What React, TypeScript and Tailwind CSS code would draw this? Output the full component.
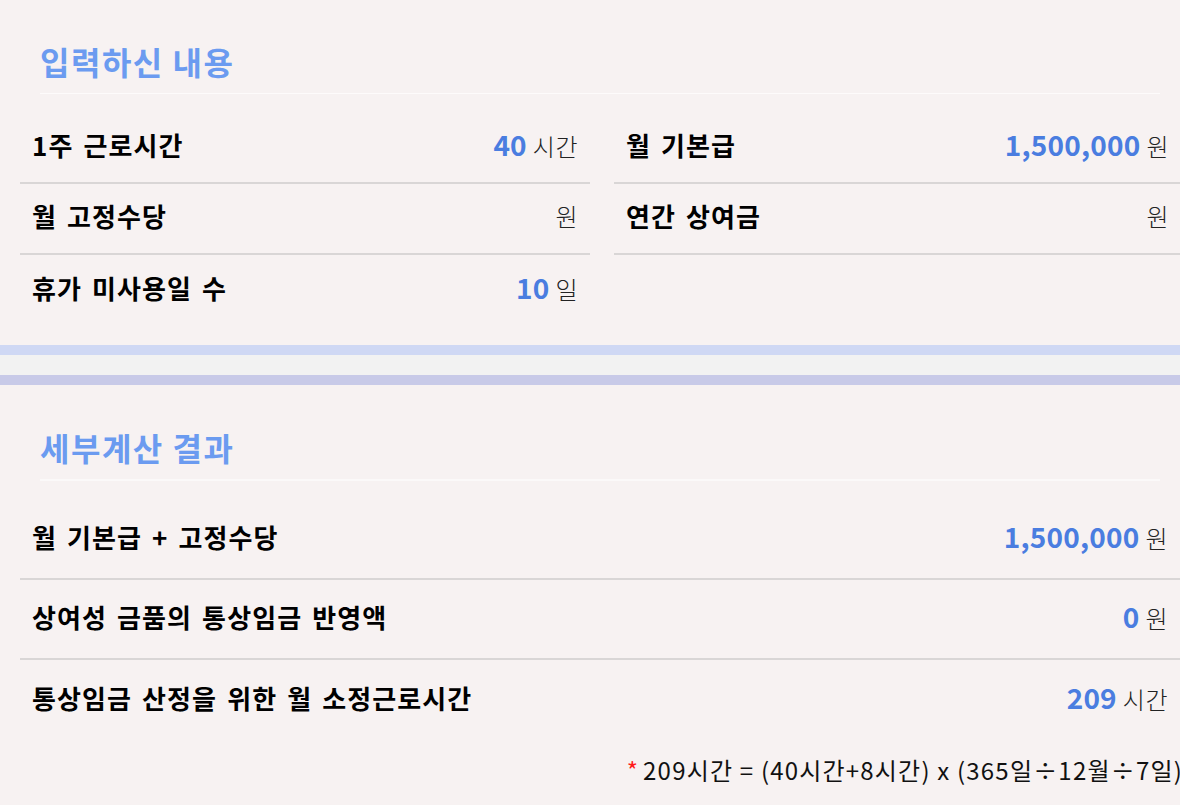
import React from "react";

const FONT = { fontFamily: '"Noto Sans CJK KR", "Noto Sans", sans-serif' };

function Row({ label, value, unit, border = true, h = "h-[71px]" }: { label: string; value?: string; unit?: string; border?: boolean; h?: string }) {
  return (
    <div className={`flex items-center justify-between px-3 pb-[5px] ${h} ${border ? "border-b-2 border-[#d9d6d6]" : ""}`}>
      <span className="text-[26px] font-bold text-black tracking-[1.1px] [word-spacing:3px] leading-[36px]">{label}</span>
      <span className="flex items-baseline gap-[6px]">
        {value && <span className="text-[28px] font-bold text-[#4a7de0] tracking-[0.2px] leading-[36px]">{value}</span>}
        {unit && <span className="text-[24px] font-light text-[#222] tracking-[0.5px] leading-[36px]">{unit}</span>}
      </span>
    </div>
  );
}

export default function App() {
  return (
    <div className="w-[1180px] h-[805px] overflow-hidden bg-[#f7f2f2]" style={FONT}>
      {/* section 1 */}
      <div className="pl-5 pt-[37px] pb-[19px]">
        <div className="ml-5 mr-5 h-[57px] border-b border-[#fdfbfb] flex items-start">
          <h2 className="text-[32px] font-bold text-[#6b9bf0] leading-[48px] tracking-[1.5px]">입력하신 내용</h2>
        </div>
        <div className="mt-[19px] grid grid-cols-[570px_567px] gap-x-[24px]">
          <div>
            <Row label="1주 근로시간" value="40" unit="시간" />
            <Row label="월 고정수당" unit="원" />
            <Row label="휴가 미사용일 수" value="10" unit="일" border={false} />
          </div>
          <div>
            <Row label="월 기본급" value="1,500,000" unit="원" />
            <Row label="연간 상여금" unit="원" />
          </div>
        </div>
      </div>

      {/* divider bands */}
      <div className="h-[10px] bg-[#cfd8f4]" />
      <div className="h-[20px] bg-[#f2f2f2]" />
      <div className="h-[10px] bg-[#c8cae8]" />

      {/* section 2 */}
      <div className="pl-5 pt-[39px]">
        <div className="ml-5 mr-5 h-[57px] border-b-2 border-[#fbf9f9] flex items-start">
          <h2 className="text-[32px] font-bold text-[#6b9bf0] leading-[46px] tracking-[1.5px]">세부계산 결과</h2>
        </div>
        <div className="mt-[19px] w-[1160px]">
          <Row label="월 기본급 + 고정수당" value="1,500,000" unit="원" h="h-[80px]" />
          <Row label="상여성 금품의 통상임금 반영액" value="0" unit="원" h="h-[80px]" />
          <Row label="통상임금 산정을 위한 월 소정근로시간" value="209" unit="시간" h="h-[80px]" border={false} />
        </div>
        <div className="flex justify-end mr-[-3px] mt-[12px]">
          <p className="whitespace-nowrap text-[24px] text-[#111] tracking-[1.2px]">
            <span className="text-[#ff1a1a] mr-[4px]">*</span>209시간 = (40시간+8시간) x (365일÷12월÷7일)
          </p>
        </div>
      </div>
    </div>
  );
}
